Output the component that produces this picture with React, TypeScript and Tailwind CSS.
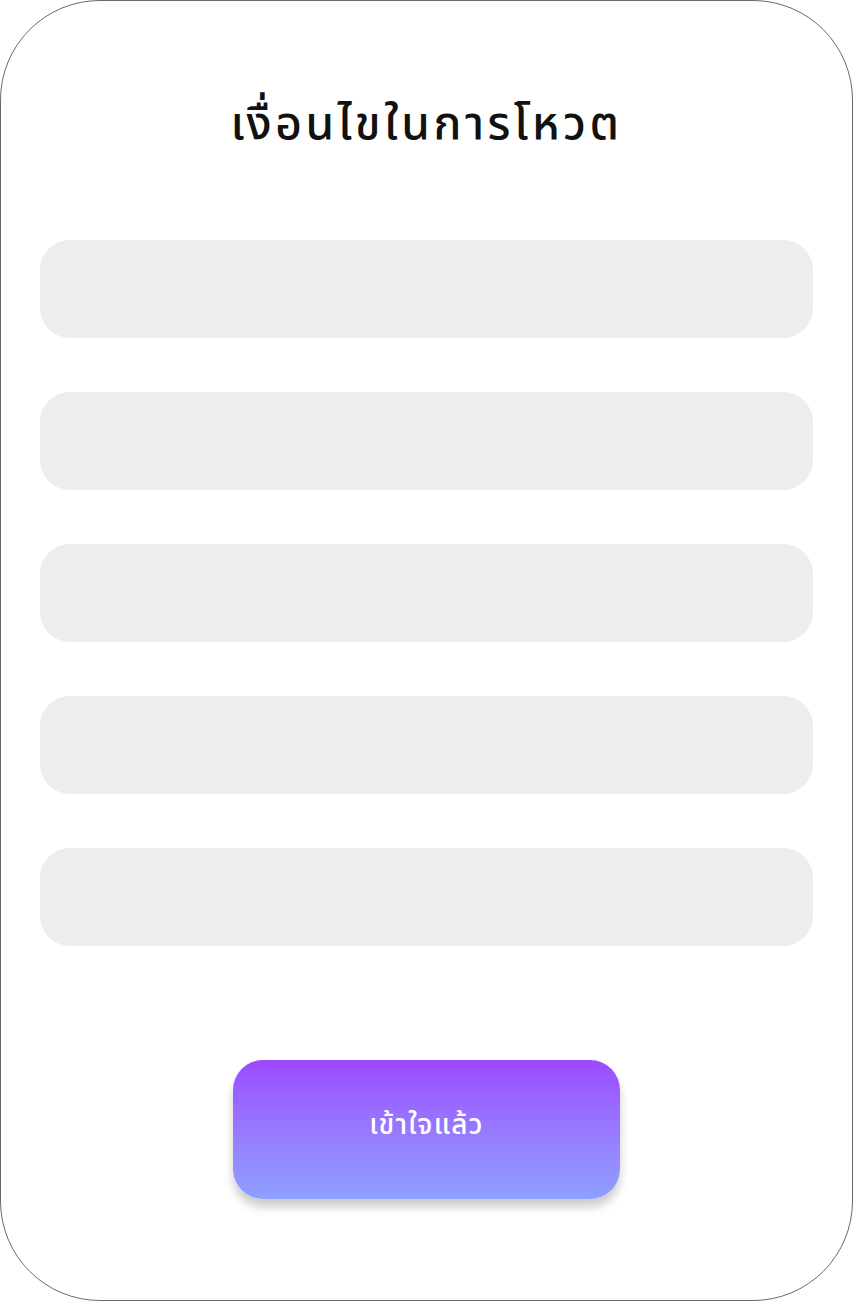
const rows = [0, 1, 2, 3, 4];

export default function App() {
  return (
    <div className="h-[1302px] w-[854px] bg-white font-['Noto_Sans','Noto_Sans_Thai',sans-serif]">
      <div className="flex h-[1301px] w-[853px] flex-col items-center rounded-[100px] border border-[#6a6a6a]">
        <h1 className="mt-[82px] text-[46px] leading-[76px] font-medium tracking-[3.5px] text-[#111111]">เงื่อนไขในการโหวต</h1>

        <div className="mt-[81px] flex w-full flex-col gap-[54px] px-[39px]">
          {rows.map((i) => (
            <div key={i} className="h-[98px] rounded-[30px] bg-[#ededed]" />
          ))}
        </div>

        <button className="mt-[114px] flex h-[139px] w-[387px] items-center justify-center rounded-[30px] bg-gradient-to-b from-[#9b48ff] to-[#8f9fff] pb-[14px] text-[28px] font-medium tracking-[1.2px] text-white shadow-[0_8px_10px_rgba(0,0,0,0.2)]">
          เข้าใจแล้ว
        </button>
      </div>
    </div>
  );
}
